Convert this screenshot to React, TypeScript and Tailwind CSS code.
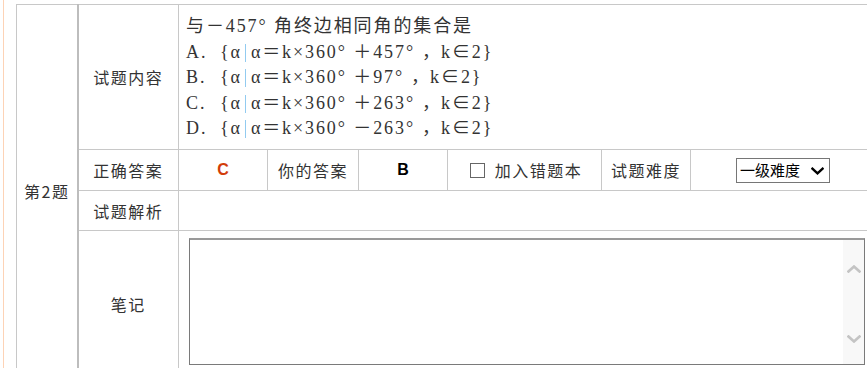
import React from "react";

const options = [
  { key: "A", sign: "＋", deg: "457" },
  { key: "B", sign: "＋", deg: "97" },
  { key: "C", sign: "＋", deg: "263" },
  { key: "D", sign: "－", deg: "263" },
];

const cell = "border border-[#c8c8c8] p-0";
const label =
  "text-center align-middle text-[16px] tracking-[1.5px] text-[#333] font-['Noto_Sans_CJK_SC',sans-serif]";

function Chevron({ className }: { className?: string }) {
  return (
    <svg viewBox="0 0 14 8" className={className} fill="none">
      <path d="M1.5 1.5 L7 6.5 L12.5 1.5" stroke="currentColor" strokeWidth="2.6" strokeLinecap="square" />
    </svg>
  );
}

export default function App() {
  return (
    <div className="w-[867px] h-[368px] overflow-hidden bg-white">
      <div className="ml-[3px] h-full border-l border-[#fdd3b6] pl-[12px] pt-[4px]">
        <table className="border-collapse table-fixed w-[863px]">
          <colgroup>
            <col className="w-[61px]" />
            <col className="w-[101px]" />
            <col className="w-[89px]" />
            <col className="w-[91px]" />
            <col className="w-[89px]" />
            <col className="w-[154px]" />
            <col className="w-[89px]" />
            <col className="w-[189px]" />
          </colgroup>
          <tbody>
            <tr className="h-[145px]">
              <td rowSpan={4} className={`${cell} border-r-2 border-r-[#bdbdbd] ${label} tracking-[0.5px]`}>
                第2题
              </td>
              <td className={`${cell} ${label}`}>试题内容</td>
              <td
                colSpan={6}
                className={`${cell} align-top pt-[9px] pl-[7px] text-[18px] leading-[25.5px] tracking-[1.9px] text-[#333] font-['Liberation_Serif','Noto_Sans_CJK_SC',serif] whitespace-nowrap`}
              >
                <div>与－457° 角终边相同角的集合是</div>
                {options.map((o) => (
                  <div key={o.key}>
                    <span className="inline-block w-[34px]">{o.key}.</span>
                    {"{"}α
                    <span className="inline-block w-px h-[18px] bg-[#92cbf0] align-[-4px] ml-[3px] mr-[5px]" />
                    α＝k×360° {o.sign}
                    {o.deg}°
                    <span className="inline-block w-[26px] pl-[7px]">，</span>
                    k∈2{"}"}
                  </div>
                ))}
              </td>
            </tr>
            <tr className="h-[41px]">
              <td className={`${cell} ${label}`}>正确答案</td>
              <td className={`${cell} text-center text-[16px] font-bold text-[#d23c0a] font-['Liberation_Sans',sans-serif]`}>
                C
              </td>
              <td className={`${cell} ${label}`}>你的答案</td>
              <td className={`${cell} text-center text-[16px] font-bold text-black font-['Liberation_Sans',sans-serif]`}>
                B
              </td>
              <td className={`${cell} ${label}`}>
                <div className="flex items-center justify-center pl-[3px]">
                  <span className="inline-block w-[15px] h-[15px] border border-[#666] mr-[10px]" />
                  <span>加入错题本</span>
                </div>
              </td>
              <td className={`${cell} ${label}`}>试题难度</td>
              <td className={`${cell} text-center align-middle`}>
                <div className="relative inline-block -ml-[4px]">
                  <select className="appearance-none w-[94px] h-[25px] border border-[#767676] bg-white pl-[3px] text-[15px] text-black font-['Noto_Sans_CJK_SC',sans-serif] outline-none">
                    <option>一级难度</option>
                  </select>
                  <Chevron className="absolute right-[6px] top-[9px] w-[13px] h-[8px] text-black pointer-events-none" />
                </div>
              </td>
            </tr>
            <tr className="h-[40px]">
              <td className={`${cell} ${label}`}>试题解析</td>
              <td colSpan={6} className={cell}></td>
            </tr>
            <tr className="h-[146px]">
              <td className={`${cell} ${label}`}>笔记</td>
              <td colSpan={6} className={`${cell} align-top pt-[7px] pl-[10px]`}>
                <div className="relative w-[676px] h-[127px]">
                  <textarea className="block w-full h-full resize-none border border-[#7a7a7a] border-t-2 border-t-[#9a9a9a] bg-white outline-none overflow-hidden" />
                  <div className="absolute right-[1px] top-[2px] bottom-[1px] w-[21px] bg-[#f8f8f8] pointer-events-none">
                    <Chevron className="absolute left-[4px] top-[25px] w-[14px] h-[8px] text-[#c4c4c4] rotate-180" />
                    <Chevron className="absolute left-[4px] top-[95px] w-[14px] h-[8px] text-[#c4c4c4]" />
                  </div>
                </div>
              </td>
            </tr>
          </tbody>
        </table>
      </div>
    </div>
  );
}
